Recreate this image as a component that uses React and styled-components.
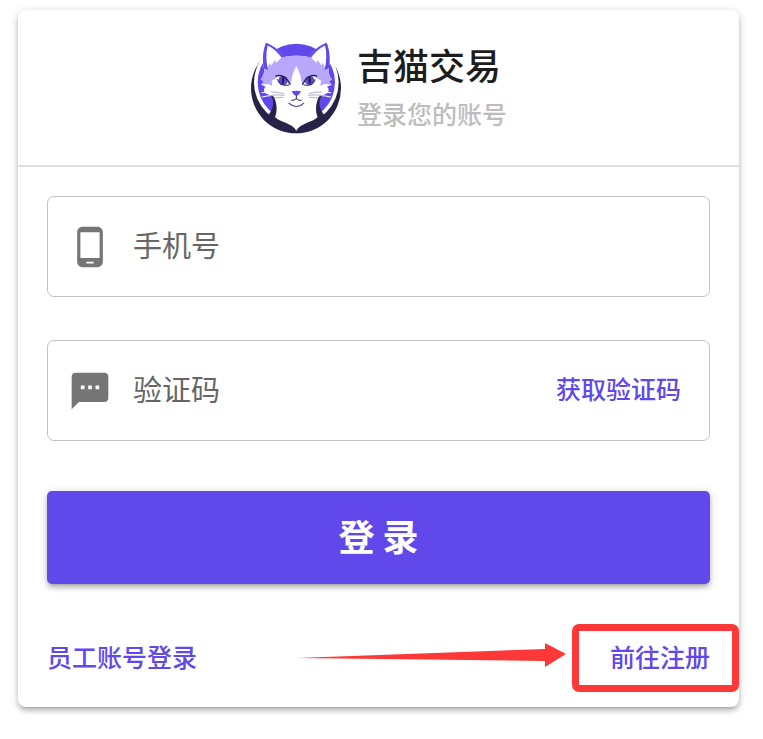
import React, { useState } from 'react';
import styled, { createGlobalStyle } from 'styled-components';
import { MdPhoneAndroid, MdSms } from 'react-icons/md';

const GlobalStyle = createGlobalStyle`
  * {
    box-sizing: border-box;
  }

  body {
    margin: 0;
    background: #fff;
    font-family: 'Noto Sans CJK SC', 'Noto Sans', sans-serif;
  }
`;

const Page = styled.main`
  padding: 10px 24px 32px 18px;
`;

const Card = styled.section`
  background: #fff;
  border-radius: 8px;
  box-shadow: 0 2px 9px rgba(0, 0, 0, 0.2), 0 4px 4px rgba(0, 0, 0, 0.14),
    0 5px 2px -4px rgba(0, 0, 0, 0.12);
`;

const CardHeader = styled.header`
  display: flex;
  align-items: center;
  justify-content: center;
  gap: 15px;
  height: 157px;
  border-bottom: 2px solid #e0e0e0;
`;

const Logo = styled.svg`
  width: 92px;
  height: 92px;
  flex: none;
`;

const Title = styled.h1`
  margin: 0;
  font-size: 36px;
  line-height: 50px;
  font-weight: 500;
  color: #1d1d1d;
`;

const Subtitle = styled.p`
  margin: 0;
  font-size: 25px;
  line-height: 48px;
  font-weight: 500;
  color: #bdbdbd;
`;

const Form = styled.form`
  padding: 29px 29px 25px;
`;

const Field = styled.div`
  display: flex;
  align-items: center;
  height: 101px;
  margin-bottom: ${props => props.$last ? 50 : 43}px;
  padding: 0 28px 0 20px;
  border: 1px solid #c2c2c2;
  border-radius: 7px;

  &:focus-within {
    border-color: #6148eb;
  }
`;

const FieldLabel = styled.label`
  display: flex;
  margin-right: 21px;
  color: #757575;
  font-size: 44px;
`;

const TextInput = styled.input`
  flex: 1;
  min-width: 0;
  padding: 0 0 6px;
  border: none;
  outline: none;
  background: transparent;
  font-family: inherit;
  font-size: 29px;
  line-height: 44px;
  color: #1d1d1d;

  &::placeholder {
    color: #666;
    opacity: 1;
  }
`;

const CodeButton = styled.button`
  padding: 0 0 6px;
  border: none;
  background: none;
  font-family: inherit;
  font-size: 25px;
  line-height: 44px;
  font-weight: 500;
  color: #6148eb;
  cursor: pointer;
`;

const SubmitButton = styled.button`
  display: block;
  width: 100%;
  height: 93px;
  padding: 0 0 6px;
  border: none;
  border-radius: 5px;
  background: #6148eb;
  color: #fff;
  font-family: inherit;
  font-size: 36px;
  line-height: 50px;
  font-weight: 700;
  cursor: pointer;
  box-shadow: 0 2px 9px rgba(0, 0, 0, 0.2), 0 4px 4px rgba(0, 0, 0, 0.14),
    0 5px 2px -4px rgba(0, 0, 0, 0.12);
`;

const CardFooter = styled.footer`
  display: flex;
  align-items: center;
  height: 98px;
  padding: 0 29px 4px;
`;

const FooterLink = styled.a`
  position: relative;
  font-size: 25px;
  line-height: 44px;
  font-weight: 500;
  color: #6148eb;
  text-decoration: none;
`;

const MarkedLink = styled(FooterLink)`
  &::after {
    content: '';
    position: absolute;
    inset: -10px -29px -14px -38px;
    border: 7px solid #fc3838;
    border-radius: 7px;
    pointer-events: none;
  }
`;

const Arrow = styled.svg`
  width: 270px;
  height: 24px;
  margin: 0 43px 2px auto;
`;

function CatLogo() {
  return (
    <Logo viewBox="28 25 274 276" role="img" aria-label="吉猫交易">
      <circle cx="165" cy="164" r="135" fill="#262348" />
      <circle cx="166" cy="146" r="127" fill="#fff" />
      <circle cx="166" cy="146" r="116" fill="#6148eb" />
      {/* shoulders and chest */}
      <path
        d="M90 187C101 205 99 222 80 248L104 277L166 299L228 277L252 248C233 222 231 205 242 187Z"
        fill="#262348"
      />
      <path
        d="M94 180C109 207 110 232 102 250C119 267 153 268 166 291C179 268 213 267 230 250C222 232 223 207 238 180Z"
        fill="#fff"
      />
      {/* head */}
      <path
        d="M75 27C65 52 64 82 69 104C71 116 66 130 59 138L69 142L60 153L74 159C65 167 69 177 80 182C96 190 119 193 139 208Q166 232 193 208C213 193 236 190 252 182C263 177 267 167 258 159L272 153L263 142L273 138C266 130 261 116 263 104C268 82 267 52 257 27C233 37 215 53 204 71C180 65 152 65 128 71C117 53 99 37 75 27Z"
        fill="#fff"
      />
      <path
        d="M75 27C65 52 64 82 69 104C71 116 66 130 59 138L69 142L60 153L82 151L94 157L92 141L104 134C117 133 124 133 132 137C142 139 147 145 149 152L154 124L166 96L178 124L183 152C185 145 190 139 200 137C208 133 215 133 228 134L240 141L238 157L250 151L272 153L263 142L273 138C266 130 261 116 263 104C268 82 267 52 257 27C233 37 215 53 204 71C180 65 152 65 128 71C117 53 99 37 75 27Z"
        fill="#b9a7fc"
      />
      {/* ears */}
      <path d="M79 36C73 60 74 83 79 104L87 87L90 96L103 78L105 88L121 72C110 56 97 44 79 36Z" fill="#fff" />
      <path d="M253 36C259 60 258 83 253 104L245 87L242 96L229 78L227 88L211 72C222 56 235 44 253 36Z" fill="#fff" />
      <path d="M75 27C65 52 64 82 69 104L81 109C75 83 74 59 80 35C98 43 111 56 122 71L128 71C117 51 99 37 75 27Z" fill="#6148eb" />
      <path d="M257 27C267 52 268 82 263 104L251 109C257 83 258 59 252 35C234 43 221 56 210 71L204 71C215 51 233 37 257 27Z" fill="#6148eb" />
      {/* eyes */}
      <path d="M106 127C121 123 138 134 147 153C131 158 113 151 109 136Z" fill="#fff" />
      <path d="M226 127C211 123 194 134 185 153C201 158 219 151 223 136Z" fill="#fff" />
      <ellipse cx="126" cy="141" rx="14" ry="14" fill="#6148eb" />
      <ellipse cx="206" cy="141" rx="14" ry="14" fill="#6148eb" />
      <ellipse cx="126" cy="140" rx="4" ry="11" fill="#262348" />
      <ellipse cx="206" cy="140" rx="4" ry="11" fill="#262348" />
      <g fill="none" stroke="#262348" strokeWidth="4" strokeLinecap="round">
        <path d="M105 127C121 122 137 131 147 152" />
        <path d="M227 127C211 122 195 131 185 152" />
        <path d="M110 138C113 151 127 158 143 154" strokeWidth="3" />
        <path d="M222 138C219 151 205 158 189 154" strokeWidth="3" />
      </g>
      {/* nose and mouth */}
      <path d="M152 173Q166 169 180 173Q177 183 166 188Q155 183 152 173Z" fill="#6148eb" />
      <g fill="none" stroke="#262348" strokeWidth="3" strokeLinecap="round">
        <path d="M166 187V195M152 200Q161 201 166 195Q171 201 180 200" />
        <path d="M144 209Q166 229 188 209" stroke="#5b529f" strokeWidth="4" />
      </g>
      {/* whiskers */}
      <g fill="none" stroke="#fff" strokeWidth="3" strokeLinecap="round">
        <path d="M132 182Q97 169 63 177M132 187Q94 182 63 190" />
        <path d="M200 182Q235 169 269 177M200 187Q238 182 269 190" />
      </g>
      <g fill="none" stroke="#5b529f" strokeWidth="2" strokeLinecap="round" opacity="0.7">
        <path d="M128 180Q110 174 91 175M129 185Q104 181 87 186M126 191Q107 190 94 196" />
        <path d="M204 180Q222 174 241 175M203 185Q228 181 245 186M206 191Q225 190 238 196" />
      </g>
    </Logo>
  );
}

function App() {
  const [phone, setPhone] = useState('');
  const [code, setCode] = useState('');

  return (
    <Page>
      <GlobalStyle />
      <Card>
        <CardHeader>
          <CatLogo />
          <div>
            <Title>吉猫交易</Title>
            <Subtitle>登录您的账号</Subtitle>
          </div>
        </CardHeader>
        <Form onSubmit={(e) => e.preventDefault()}>
          <Field>
            <FieldLabel htmlFor="phone" aria-label="手机号">
              <MdPhoneAndroid />
            </FieldLabel>
            <TextInput
              id="phone"
              type="tel"
              placeholder="手机号"
              value={phone}
              onChange={(e) => setPhone(e.target.value)}
            />
          </Field>
          <Field $last>
            <FieldLabel htmlFor="code" aria-label="验证码">
              <MdSms />
            </FieldLabel>
            <TextInput
              id="code"
              type="text"
              placeholder="验证码"
              value={code}
              onChange={(e) => setCode(e.target.value)}
            />
            <CodeButton type="button">获取验证码</CodeButton>
          </Field>
          <SubmitButton type="submit">登 录</SubmitButton>
        </Form>
        <CardFooter>
          <FooterLink href="#staff">员工账号登录</FooterLink>
          <Arrow viewBox="0 0 270 24" aria-hidden="true">
            <path d="M0 15L248 6V0L269 11L248 24V18L0 15Z" fill="#fc3838" />
          </Arrow>
          <MarkedLink href="#register">前往注册</MarkedLink>
        </CardFooter>
      </Card>
    </Page>
  );
}

export default App;
